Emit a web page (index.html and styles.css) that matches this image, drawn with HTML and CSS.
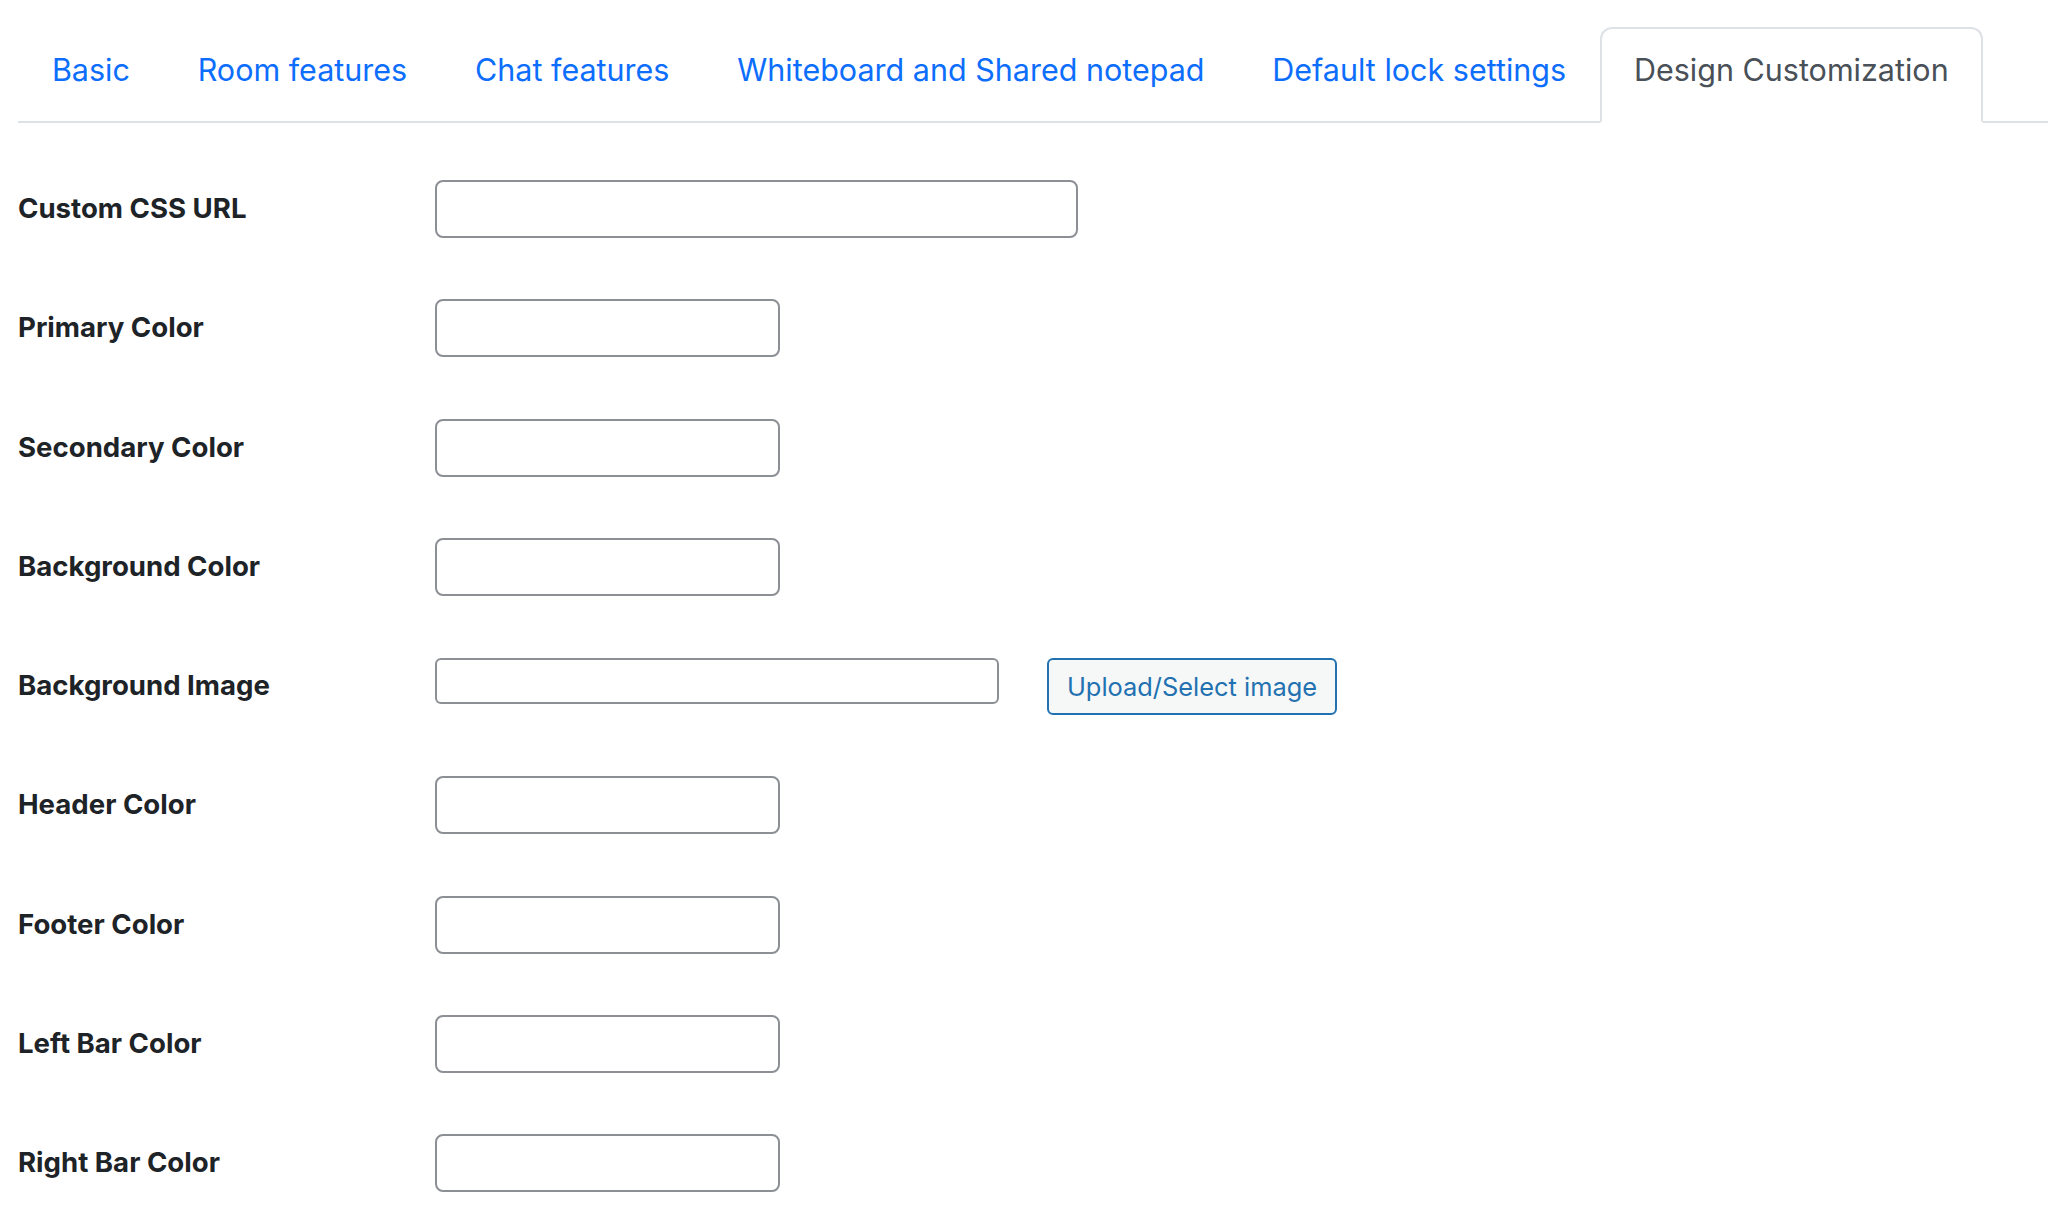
FILE: index.html
```html
<!DOCTYPE html>
<html lang="en">
<head>
<meta charset="utf-8">
<title>Design Customization</title>
<link rel="stylesheet" href="styles.css">
</head>
<body>
<div class="page">
  <ul class="tabs">
    <li><a class="tab" href="#">Basic</a></li>
    <li><a class="tab" href="#">Room features</a></li>
    <li><a class="tab" href="#">Chat features</a></li>
    <li><a class="tab" href="#">Whiteboard and Shared notepad</a></li>
    <li><a class="tab" href="#">Default lock settings</a></li>
    <li><a class="tab active" href="#">Design Customization</a></li>
  </ul>
  <div class="form">
    <div class="row"><label class="label">Custom CSS URL</label><input class="field wide" type="text"></div>
    <div class="row"><label class="label">Primary Color</label><input class="field color" type="text"></div>
    <div class="row"><label class="label">Secondary Color</label><input class="field color" type="text"></div>
    <div class="row"><label class="label">Background Color</label><input class="field color" type="text"></div>
    <div class="row"><label class="label">Background Image</label><input class="field image" type="text"><button class="btn" type="button">Upload/Select image</button></div>
    <div class="row"><label class="label">Header Color</label><input class="field color" type="text"></div>
    <div class="row"><label class="label">Footer Color</label><input class="field color" type="text"></div>
    <div class="row"><label class="label">Left Bar Color</label><input class="field color" type="text"></div>
    <div class="row"><label class="label">Right Bar Color</label><input class="field color" type="text"></div>
  </div>
</div>
</body>
</html>
```
FILE: styles.css
```css
html, body {
  margin: 0;
  padding: 0;
  background: #ffffff;
}
body {
  font-family: Inter, "Liberation Sans", Arial, sans-serif;
}
.page {
  padding-left: 18px;
}
.tabs {
  list-style: none;
  margin: 0;
  padding: 27px 0 0 0;
  display: flex;
  border-bottom: 2px solid #dee2e6;
}
.tabs li {
  margin-bottom: -2px;
}
.tab {
  display: block;
  padding: 17px 31.9px 27px;
  line-height: 48px;
  font-size: 30.5px;
  color: #0d6efd;
  text-decoration: none;
  border: 2px solid transparent;
  border-radius: 12px 12px 0 0;
}
.tab.active {
  color: #495057;
  border-color: #dee2e6 #dee2e6 #ffffff;
  background: #ffffff;
}
.form {
  display: flex;
  flex-direction: column;
  gap: 61.3px;
  padding-top: 57px;
}
.row {
  display: flex;
  align-items: flex-start;
}
.label {
  width: 417px;
  flex: none;
  line-height: 56px;
  font-size: 27.6px;
  font-weight: 700;
  color: #1d2327;
}
.field {
  box-sizing: border-box;
  height: 58px;
  border: 2px solid #8c8f94;
  border-radius: 8px;
  background: #fff;
  margin: 0;
  padding: 0 16px;
  font-size: 26px;
}
.field.wide { width: 643px; }
.field.color { width: 345px; }
.field.image {
  width: 564px;
  height: 46px;
  border-radius: 6px;
  margin-top: 1px;
}
.btn {
  box-sizing: border-box;
  margin: 1px 0 0 48px;
  width: 290px;
  height: 57px;
  border: 2px solid #2271b1;
  border-radius: 6px;
  background: #f6f7f7;
  color: #2271b1;
  font-family: Inter, "Liberation Sans", Arial, sans-serif;
  font-size: 25.4px;
  padding: 0;
}
```
